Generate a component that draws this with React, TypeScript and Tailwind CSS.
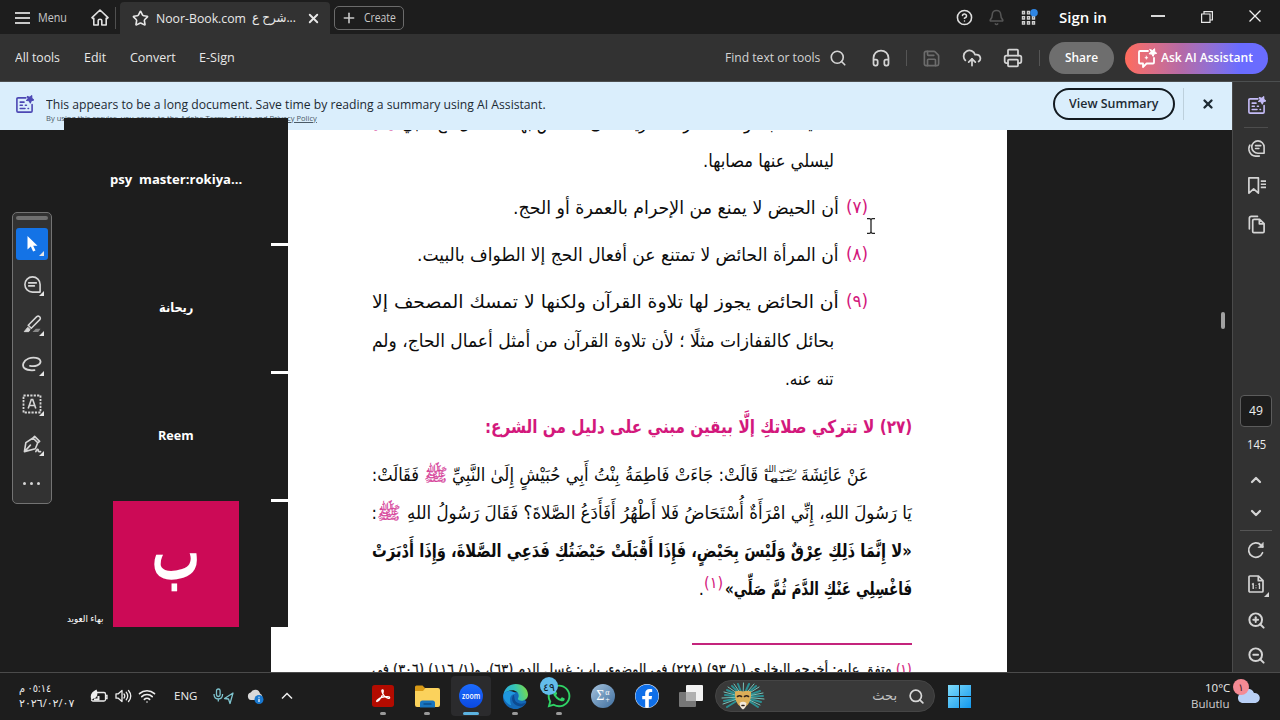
import { type ReactNode, useLayoutEffect, useRef, useState } from 'react'
import {
  Bell,
  ChevronDown,
  ChevronUp,
  CircleHelp,
  CloudUpload,
  Headphones,
  Plus,
  Printer,
  Save,
  Search,
  Star,
  Wifi,
  X,
  ZoomIn,
  ZoomOut
} from 'lucide-react'
import { FaFacebook, FaWhatsapp } from 'react-icons/fa'

interface FitProps {
  children: ReactNode
  className?: string
  rtl?: boolean
}

// Squeezes or stretches one line of text to the width of its box
const Fit = ({ children, className = '', rtl = false }: FitProps) => {
  const outer = useRef<HTMLSpanElement>(null)
  const inner = useRef<HTMLSpanElement>(null)
  const [scale, setScale] = useState(1)

  useLayoutEffect(() => {
    if (outer.current && inner.current) {
      setScale(outer.current.clientWidth / inner.current.offsetWidth)
    }
  }, [children])

  return (
    <span ref={outer} dir={rtl ? 'rtl' : 'ltr'} className={`block shrink-0 whitespace-pre ${className}`}>
      <span
        ref={inner}
        className={`inline-block ${rtl ? 'origin-right' : 'origin-left'}`}
        style={{ transform: `scaleX(${scale})` }}
      >
        {children}
      </span>
    </span>
  )
}

const SummaryIcon = ({ className = '' }: { className?: string }) => (
  <svg viewBox="0 0 20 20" className={className} fill="none" stroke="currentColor" strokeWidth="1.7" strokeLinecap="round" strokeLinejoin="round">
    <path d="M11.5 3H3.2Q2 3 2 4.2v12.6Q2 18 3.2 18h13.6q1.2 0 1.2-1.2V10" />
    <path d="M5.5 7.5h4M5.5 10.8h2.2M5.5 14.2h5M11 10.8h1M13.8 14.2h.4" />
    <path d="m13 1.5 2.6 1 2-1.8.1 2.8 2 1.8-2.6.7-1 2.4-1.3-2.3-2.7-.3 1.8-2z" fill="currentColor" strokeWidth="1.2" />
  </svg>
)

const ChatSparkIcon = ({ className = '' }: { className?: string }) => (
  <svg viewBox="0 0 20 20" className={className} fill="none" stroke="currentColor" strokeWidth="1.8" strokeLinecap="round" strokeLinejoin="round">
    <path d="M11 3H3Q2 3 2 4v10.5q0 1 1 1h3V19l3.6-3.5H16q1 0 1-1V10" />
    <path d="m13 1.5 2.6 1 2-1.8.1 2.8 2 1.8-2.6.7-1 2.4-1.3-2.3-2.7-.3 1.8-2z" fill="currentColor" strokeWidth="1" />
    <path d="m9.4 8 .5 1.2 1.2.5-1.2.5-.5 1.2-.5-1.2-1.2-.5 1.2-.5z" fill="currentColor" strokeWidth=".4" />
  </svg>
)

const TitleBar = () => (
  <header className="flex h-[34px] shrink-0 items-center bg-[#1d1d1d] pt-px text-[#c8c8c8]">
    <svg viewBox="0 0 15 12" className="ml-[15px] h-3 w-[15px]" stroke="currentColor" strokeWidth="1.8">
      <path d="M0 1h15M0 6h15M0 11h15" />
    </svg>
    <Fit className="ml-2 w-[29px] text-[13px]">Menu</Fit>
    <svg viewBox="0 0 18 17" className="ml-6 h-[17px] w-[18px]" fill="none" stroke="#e0e0e0" strokeWidth="1.6" strokeLinejoin="round">
      <path d="M1 8.6 9 1l8 7.6-1.2 1.2-.6-.6V16h-4.4v-4.4q0-1.4-1.8-1.4t-1.8 1.4V16H2.8V9.2l-.6.6z" />
    </svg>
    <div className="ml-1.5 h-[22px] w-px bg-[#505050]" />
    <div className="ml-1 mt-px flex h-8 w-[210px] items-center self-start rounded-t bg-[#323232] pl-3 text-[#e8e8e8]">
      <Star className="size-[17px] shrink-0" strokeWidth={2.3} />
      <Fit className="ml-[7px] w-[90px] text-[13.5px]">Noor-Book.com</Fit>
      <Fit className="ml-1.5 w-11 text-[13px]">شرح ع...</Fit>
      <X className="ml-2.5 size-[15px] shrink-0" strokeWidth={3} />
    </div>
    <div className="ml-1 flex h-6 w-[70px] items-center rounded-[5px] border-[1.5px] border-[#6b6b6b] pl-1.5">
      <Plus className="size-4 shrink-0" strokeWidth={2.4} />
      <Fit className="ml-[7px] w-8 text-xs">Create</Fit>
    </div>

    <div className="ml-auto flex items-center">
      <CircleHelp className="size-[17px] text-[#e0e0e0]" strokeWidth={2.2} />
      <Bell className="ml-[15px] size-[17px] text-[#555]" strokeWidth={2.2} />
      <svg viewBox="0 0 17 17" className="ml-4 size-[17px]" fill="none" stroke="#d0d0d0" strokeWidth="1.4">
        <path d="M1.5 2.5h2v2.4h-2zM6.5 2.5h2v2.4h-2zM1.5 7.6h2V10h-2zM6.5 7.6h2V10h-2zM11.5 7.6h2V10h-2zM1.5 12.7h2v2.4h-2zM6.5 12.7h2v2.4h-2zM11.5 12.7h2v2.4h-2z" />
        <circle cx="13" cy="3.8" r="3.8" fill="#2f86e4" stroke="none" />
      </svg>
      <Fit className="ml-[21px] w-12 text-[15px] font-semibold text-white">Sign in</Fit>
      <div className="ml-11 mb-1 h-[2px] w-3.5 bg-[#d8d8d8]" />
      <svg viewBox="0 0 12 12" className="ml-9 mb-0.5 size-3" fill="none" stroke="#e8e8e8" strokeWidth="1.2">
        <path d="M.6 3h8.4v8.4H.6zM3 3V.6h8.4V9H9" />
      </svg>
      <svg viewBox="0 0 12 12" className="ml-9 mr-[19px] mb-1 size-3" stroke="#f0f0f0" strokeWidth="1.3">
        <path d="m.5.5 11 11M11.5.5l-11 11" />
      </svg>
    </div>
  </header>
)

const ToolBar = () => (
  <nav className="flex h-12 shrink-0 items-center border-b border-[#4c4f50] bg-[#323232] pt-px pl-[15px] pr-3 text-[13px] text-[#e8e8e8]">
    <Fit className="w-[45px]">All tools</Fit>
    <Fit className="ml-6 w-[22px]">Edit</Fit>
    <Fit className="ml-6 w-[46px]">Convert</Fit>
    <Fit className="ml-[23px] w-9">E-Sign</Fit>
    <div className="ml-auto flex items-center text-[#d4d4d4]">
      <Fit className="w-[95px]">Find text or tools</Fit>
      <Search className="ml-[9px] size-[18px]" strokeWidth={2.2} />
      <Headphones className="ml-6 size-5" strokeWidth={2.1} />
      <div className="ml-[15px] h-4 w-px bg-[#555]" />
      <Save className="ml-[15px] size-[19px] text-[#6c6c6c]" strokeWidth={2.1} />
      <CloudUpload className="ml-[21px] size-5" strokeWidth={2.1} />
      <Printer className="ml-[21px] size-5" strokeWidth={2.1} />
      <div className="ml-4 h-4 w-px bg-[#555]" />
      <div className="ml-[9px] flex h-8 w-[65px] items-center justify-center rounded-full bg-[#6e6e6e] text-white">
        <Fit className="w-[33px] font-semibold">Share</Fit>
      </div>
      <div className="ml-[11px] flex h-[31px] w-[143px] items-center rounded-full bg-linear-to-r from-[#ff6b5b] via-[#b46aa8] via-40% to-[#6a6cff] to-80% pl-3 text-white">
        <ChatSparkIcon className="size-5 shrink-0" />
        <Fit className="ml-1 w-[92px] font-semibold">Ask AI Assistant</Fit>
      </div>
    </div>
  </nav>
)

const Banner = () => (
  <div className="relative flex h-12 shrink-0 items-center bg-[#daeefc] text-[#1d2a33]">
    <SummaryIcon className="ml-[15px] mb-1 size-[19px] shrink-0 text-[#4d48b4]" />
    <div className="ml-3 flex flex-col pt-[5px]">
      <Fit className="h-[18px] w-[500px] text-[13px] leading-[18px]">
        This appears to be a long document. Save time by reading a summary using AI Assistant.
      </Fit>
      <Fit className="h-2.5 w-[271px] text-[8px] leading-[10px] text-[#4a5a66]">
        By using this service, you agree to the Adobe Terms of Use and <u>Privacy Policy</u>
      </Fit>
    </div>
    <div className="ml-auto mb-1 flex items-center">
      <div className="flex h-8 w-[122px] items-center justify-center rounded-full border-2 border-[#131a20]">
        <Fit className="w-[90px] text-[13px] font-semibold">View Summary</Fit>
      </div>
      <div className="ml-2 h-8 w-px bg-[#bdd0dc]" />
      <X className="ml-[17px] mr-[17px] size-[14px]" strokeWidth={4} />
    </div>
  </div>
)

const Salla = ({ className = '' }: { className?: string }) => (
  <Fit rtl className={`w-6 text-[#d6439a] [-webkit-text-stroke:0.3px_#d6439a] ${className}`}>ﷺ</Fit>
)

const Point = ({ num, children }: { num: string; children: ReactNode }) => (
  <div className="flex h-[38px] items-center pr-11">
    <Fit rtl className="mt-0.5 ml-[7px] w-[22px] text-[17px] text-[#d3187c]">{num}</Fit>
    {children}
  </div>
)

const Page = () => (
  <article dir="rtl" className="ml-[271px] h-full w-[736px] overflow-hidden bg-white pl-[101px] pr-[95px] font-['DejaVu_Sans_Condensed','DejaVu_Sans',sans-serif] text-[18px] text-[#0c0c0c]">
    <div className="-mt-[27px] flex h-[38px] items-center pr-[78px]">
      <Fit rtl className="w-[432px]">أنه يستحب مواساة المرأة الحزينة على ما نقص بها كما فعل مع النبي</Fit>
      <Salla className="mr-1.5" />
    </div>
    <div className="flex h-[38px] items-center pr-[78px]">
      <Fit rtl className="w-[131px]">ليسلي عنها مصابها.</Fit>
    </div>
    <div className="mt-[9px] flex flex-col gap-[9px]">
      <Point num="(٧)">
        <Fit rtl className="w-[326px]">أن الحيض لا يمنع من الإحرام بالعمرة أو الحج.</Fit>
      </Point>
      <Point num="(٨)">
        <Fit rtl className="w-[422px]">أن المرأة الحائض لا تمتنع عن أفعال الحج إلا الطواف بالبيت.</Fit>
      </Point>
      <Point num="(٩)">
        <Fit rtl className="w-[467px]">أن الحائض يجوز لها تلاوة القرآن ولكنها لا تمسك المصحف إلا</Fit>
      </Point>
    </div>
    <div className="mt-px flex h-[38px] items-center pr-[78px]">
      <Fit rtl className="w-[462px]">بحائل كالقفازات مثلًا ؛ لأن تلاوة القرآن من أمثل أعمال الحاج، ولم</Fit>
    </div>
    <div className="flex h-[38px] items-center pr-[78px]">
      <Fit rtl className="w-[49px]">تنه عنه.</Fit>
    </div>
    <h2 className="mt-2.5 flex h-[38px] items-center font-bold text-[#d3187c]">
      <Fit rtl className="w-[427px]">(٢٧) لا تتركي صلاتكِ إلَّا بيقين مبني على دليل من الشرع:</Fit>
    </h2>
    <div className="mt-2.5 flex h-[38px] items-center pr-11">
      <Fit rtl className="w-[67px]">عَنْ عَائِشَةَ</Fit>
      <span className="mr-1 flex flex-col items-center">
        <Fit rtl className="h-[9px] w-[33px] text-[9px] leading-[9px]">رضي الله</Fit>
        <Fit rtl className="h-[9px] w-[33px] text-[9px] leading-[9px]">عنها</Fit>
      </span>
      <Fit rtl className="mr-1.5 w-[306px]">قَالَتْ: جَاءَتْ فَاطِمَةُ بِنْتُ أَبِي حُبَيْشٍ إِلَىٰ النَّبِيِّ</Fit>
      <Salla className="mr-1" />
      <Fit rtl className="mr-[5px] w-[47px]">فَقَالَتْ:</Fit>
    </div>
    <div className="flex h-[38px] items-center">
      <Fit rtl className="w-[505px]">يَا رَسُولَ اللهِ، إِنِّي امْرَأَةٌ أُسْتَحَاضُ فَلا أَطْهُرُ أَفَأَدَعُ الصَّلاةَ؟ فَقَالَ رَسُولُ اللهِ</Fit>
      <Salla className="mr-1.5" />
      <span>:</span>
    </div>
    <div className="flex h-[38px] items-center font-bold">
      <Fit rtl className="w-[540px]">«لا إِنَّمَا ذَلِكِ عِرْقٌ وَلَيْسَ بِحَيْضٍ، فَإِذَا أَقْبَلَتْ حَيْضَتُكِ فَدَعِي الصَّلاةَ، وَإِذَا أَدْبَرَتْ</Fit>
    </div>
    <div className="flex h-[38px] items-center font-bold">
      <Fit rtl className="w-[187px]">فَاغْسِلِي عَنْكِ الدَّمَ ثُمَّ صَلِّي»</Fit>
      <Fit rtl className="mr-0.5 mb-2.5 w-[19px] text-[16px] font-normal text-[#d3187c]">(١)</Fit>
      <span className="font-normal">.</span>
    </div>
    <div className="-ml-px mt-9 h-[2px] w-[220px] bg-[#c4247c]" />
    <div className="mt-2 flex h-8 items-center text-[14px] [-webkit-text-stroke:0.2px]">
      <Fit rtl className="w-[16px] text-[#d3187c]">(١)</Fit>
      <Fit rtl className="mr-1 w-[520px]">متفق عليه: أخرجه البخاري (١/ ٩٣) (٢٢٨) في الوضوء، باب: غسل الدم (٦٣)، و(١/ ١١٦) (٣٠٦) في</Fit>
    </div>
  </article>
)

const Corner = () => (
  <svg viewBox="0 0 5 5" className="absolute right-1 bottom-1 size-[5px]">
    <path d="M5 0v5H0z" fill="#e6e6e6" />
  </svg>
)

const toolIcons = [
  <svg key="note" viewBox="0 0 20 20" className="size-[19px]" fill="none" stroke="currentColor" strokeWidth="1.7" strokeLinecap="round" strokeLinejoin="round">
    <path d="M10 2a8 8 0 1 0 0 16h8v-8a8 8 0 0 0-8-8Z" />
    <path d="M6 8.3h8M6 11.5h6" />
  </svg>,
  <svg key="marker" viewBox="0 0 20 20" className="size-[19px]" fill="none" stroke="currentColor" strokeWidth="1.6" strokeLinejoin="round">
    <path d="m5.5 10.7 9-9q1.5-1.200 3 .2 1.4 1.500.2 3l-9 9z" />
    <path d="m5 13 2.500 2.200L6 17.500H1.300z" fill="currentColor" strokeWidth="1" />
    <path d="M10 18h6l2.500-3.500h-5z" fill="#888" stroke="none" />
  </svg>,
  <svg key="loop" viewBox="0 0 20 20" className="size-[20px]" fill="none" stroke="currentColor" strokeWidth="1.8" strokeLinecap="round">
    <path d="M8 11.8C13 13 19 11 18.500 7.300 18 3.500 11 2.800 6.500 4.500 1.500 6.500-.5 11.500 2.500 14.300q3 2.500 10 1.900" />
  </svg>,
  <svg key="textbox" viewBox="0 0 20 20" className="size-5" fill="none" stroke="currentColor">
    <rect x="1.5" y="1.5" width="17" height="17" strokeWidth="1.8" strokeDasharray="2.2 1.2" />
    <path d="m6.2 14.5 3.1-9h1.4l3.1 9M7.3 11.5h5.4" strokeWidth="1.6" />
  </svg>,
  <svg key="sign" viewBox="0 0 20 20" className="size-[19px]" fill="none" stroke="currentColor" strokeWidth="1.7" strokeLinecap="round" strokeLinejoin="round">
    <path d="M1.5 17.5 3 8l7.5-4.800 5 5-2.500 6.300zM10.500 3.200l1.700-1.700 5.300 5.200-2 1.500M1.800 17.200l6-6.500" />
    <path d="M13.5 17.5c1.5-3 2.500-3 2.500-1.300 0 1.500 1 1.300 2.500 1.300" />
  </svg>
]

const ToolBox = () => (
  <aside className="absolute top-[130px] left-3 flex h-[292px] w-10 flex-col items-center rounded-[5px] border border-[#737373] bg-[#323232] text-[#d6d6d6]">
    <div className="mt-[3px] h-1 w-8 rounded-full bg-[#707070]" />
    <div className="relative mt-2 flex size-8 items-center justify-center rounded-[3px] bg-[#1473e6]">
      <svg viewBox="0 0 12 16" className="h-4 w-3" fill="#fff">
        <path d="M1.5 0v13.500l3.300-3 2.300 5 2.400-1.100-2.300-4.700h4.300z" />
      </svg>
      <Corner />
    </div>
    {toolIcons.map((icon, i) => (
      <div key={i} className="relative mt-2 flex size-8 items-center justify-center">
        {icon}
        <Corner />
      </div>
    ))}
    <div className="mt-[22px] flex gap-1 pr-px">
      <i className="size-[3px] rounded-full bg-current" />
      <i className="size-[3px] rounded-full bg-current" />
      <i className="size-[3px] rounded-full bg-current" />
    </div>
  </aside>
)

// Floating participant strip of the meeting window
const Participants = () => (
  <section className="absolute top-9 left-16 flex w-56 flex-col gap-[3px] text-[13px] font-bold text-white *:bg-[#1d1d1d]">
    <div className="flex h-[125px] items-center justify-center pb-0.5">
      <Fit className="w-[132px]">psy  master:rokiya...</Fit>
    </div>
    <div className="flex h-[125px] items-center justify-center pb-0.5">
      <Fit rtl className="w-[34px]">ريحانة</Fit>
    </div>
    <div className="flex h-[125px] items-center justify-center pb-0.5">
      <Fit className="w-9">Reem</Fit>
    </div>
    <div className="flex h-[125px] items-end">
      <Fit rtl className="ml-[3px] w-[37px] text-[9.5px] leading-[17px] font-normal">بهاء العويد</Fit>
      <div className="ml-[9px] flex size-[126px] items-center justify-center bg-[#cc0a56]">
        <Fit rtl className="mb-[22px] w-[48px] font-['DejaVu_Sans',sans-serif] text-[72px] leading-none font-normal [-webkit-text-stroke:2.5px_white]">ب</Fit>
      </div>
    </div>
  </section>
)

const Rail = () => (
  <aside className="flex w-12 shrink-0 flex-col items-center border-l border-[#4a4a4a] bg-[#323232] pr-px text-[#d4d4d4]">
    <SummaryIcon className="mt-3.5 size-[19px] text-[#c5bcf8]" />
    <div className="mt-3 h-px w-6 bg-[#4d4d4d]" />
    <svg viewBox="0 0 20 20" className="mt-[11px] size-[19px]" fill="none" stroke="currentColor" strokeWidth="1.7" strokeLinecap="round" strokeLinejoin="round">
      <path d="M11.5 2a6.500 6.500 0 1 0 0 13H18V8.500A6.500 6.500 0 0 0 11.500 2ZM9 7h5.500M9 10h3.500" />
      <path d="M3 6.500C.5 11 3 17.500 9 18h4" />
    </svg>
    <svg viewBox="0 0 20 20" className="mt-[18px] size-[19px]" fill="none" stroke="currentColor" strokeWidth="1.8" strokeLinejoin="round">
      <path d="M2 2h10v16l-5-4.500L2 18zM14.500 5.500H20M14.500 8.700H20M14.500 12H20" />
    </svg>
    <svg viewBox="0 0 20 20" className="mt-5 size-[19px]" fill="none" stroke="currentColor" strokeWidth="1.8" strokeLinecap="round" strokeLinejoin="round">
      <path d="M7.500 4.500h5.800L18 9v8.300q0 1.200-1.200 1.200H7.200q-1.200 0-1.200-1.200V5.700q0-1.200 1.500-1.200ZM13 4.800V9.300h4.800" />
      <path d="M2.500 14.500v-11q0-2 2-2H11" />
    </svg>

    <div className="mt-[161px] flex h-8 w-8 items-center justify-center rounded-[4px] border border-[#5c5c5c] bg-[#1d1d1d] text-[#eee]">
      <Fit className="w-3.5 text-[13px] font-medium">49</Fit>
    </div>
    <Fit className="mt-2 w-[19px] text-[13px] font-medium text-[#eee]">145</Fit>
    <ChevronUp className="mt-[17px] size-4" strokeWidth={3.4} />
    <ChevronDown className="mt-[17px] size-4" strokeWidth={3.4} />
    <div className="mt-[9px] h-px w-8 bg-[#555]" />
    <svg viewBox="0 0 20 20" className="mt-2.5 size-[18px]" fill="none" stroke="currentColor" strokeWidth="1.9" strokeLinecap="round" strokeLinejoin="round">
      <path d="M17.300 13A8 8 0 1 1 15.600 4.500L17.500 6.500" />
      <path d="M18 2v5.200h-5.200z" fill="currentColor" strokeWidth=".8" />
    </svg>
    <div className="relative mt-4 flex h-[18px] w-8 items-center justify-center">
      <svg viewBox="0 0 16 18" className="h-[18px] w-4" fill="none" stroke="currentColor" strokeWidth="1.7" strokeLinejoin="round">
        <path d="M2 1h8.500L15 5.500V16q0 1-1 1H2q-1 0-1-1V2q0-1 1-1ZM10.300 1v4.700H15" />
        <path d="m4 9.500 1.200-.9V14M10.300 9.500l1.200-.9V14M8 10v.6M8 12.600v.6" strokeWidth="1.400" />
      </svg>
      <svg viewBox="0 0 5 5" className="absolute right-[3px] -bottom-1 size-[5px]">
        <path d="M5 0v5H0z" fill="#d4d4d4" />
      </svg>
    </div>
    <ZoomIn className="mt-[18px] size-[19px] shrink-0" strokeWidth={2.5} />
    <ZoomOut className="mt-4 size-[19px] shrink-0" strokeWidth={2.5} />
  </aside>
)

const Slot = ({ children, mark = true }: { children: ReactNode; mark?: boolean }) => (
  <div className="relative flex h-10 w-11 items-center justify-center">
    {children}
    {mark && <span className="absolute bottom-px h-[3px] w-[6px] rounded-full bg-[#9a9a9a]" />}
  </div>
)

const TaskBar = () => (
  <footer className="relative flex h-12 shrink-0 items-center border-t border-[#4b4b4b] bg-[#1d1d1d] pb-px text-[11.5px] text-[#ededed]">
    <div className="ml-[19px] mb-0.5 flex w-[55px] flex-col items-start text-[11px] leading-[15px]">
      <Fit rtl className="w-8">٠٥:١٤ م</Fit>
      <Fit className="w-[55px]">٢٠٢٦/٠٢/٠٧</Fit>
    </div>
    <svg viewBox="0 0 18 14" className="ml-4 h-3.5 w-[18px]" fill="none" stroke="currentColor" strokeWidth="1.3">
      <path d="M7 3.500h7q1.500 0 1.500 1.500v5.500q0 1.500-1.500 1.500H3q-1.500 0-1.500-1.500M15.500 6.500h1.500v3h-1.500" />
      <path d="M1.500 11C-.5 6 1.500 3 6.500.500 8.500 5 7 9 3.500 9.500z" fill="currentColor" stroke="none" />
      <path d="M4 10.500h4.500V7" strokeWidth="2" />
    </svg>
    <svg viewBox="0 0 17 14" className="ml-[7px] h-3.5 w-[17px]" fill="none" stroke="currentColor" strokeWidth="1.3" strokeLinecap="round" strokeLinejoin="round">
      <path d="M1 4.800h2.300L7 1.500v11L3.300 9.200H1zM9 5q1.500 2 0 4M11.200 3.200q3 3.800 0 7.600M13.500 1.500q4.500 5.500 0 11" />
    </svg>
    <Wifi className="ml-1.5 size-[18px]" strokeWidth={2.2} />
    <Fit className="ml-[18px] w-[23px]">ENG</Fit>
    <svg viewBox="0 0 21 17" className="ml-4 h-[17px] w-[21px]" fill="none" stroke="#7fc4cf" strokeWidth="1.3" strokeLinejoin="round">
      <rect x="3.5" y="1" width="3.6" height="7.5" rx="1.8" />
      <path d="M1 6q0 5 4.300 5T9.600 6M5.300 11v2.500M20 5l-8.500 5.500 4 .5 1.500 4.500z" />
    </svg>
    <svg viewBox="0 0 17 17" className="ml-[13px] size-[17px]">
      <path d="M4 12a3.800 3.800 0 0 1-.3-7.400A5 5 0 0 1 13 5.500a3.500 3.500 0 0 1 0 6.500z" fill="#d9d9d9" />
      <circle cx="12" cy="11.5" r="4.5" fill="#1878d0" />
      <path d="M12 10.800v3.200M12 8.700v1" stroke="#fff" strokeWidth="1.2" />
    </svg>
    <svg viewBox="0 0 12 8" className="ml-[17px] h-2 w-3" fill="none" stroke="currentColor" strokeWidth="1.5">
      <path d="m1 6.500 5-5 5 5" />
    </svg>

    <div className="ml-[68px] flex items-center">
      <Slot>
        <svg viewBox="0 0 24 24" className="size-[22px]" fill="none">
          <rect width="24" height="24" rx="3" fill="#b30b00" />
          <path d="M5.500 18c3-1 7-7.500 6.800-11.500-.2-2-2-1.500-1.500.5.700 3.500 3.700 7 7 7.500 2 .2 2-1.500 0-1.700-4-.5-9 1-11.500 3.200-1.300 1.200-1.500 2-.8 2z" stroke="#fff" strokeWidth="1.4" />
        </svg>
      </Slot>
      <Slot>
        <svg viewBox="0 0 25 23" className="h-[23px] w-[25px]">
          <path d="M0 2q0-1.500 1.500-1.500h6L10 3h4v5H0z" fill="#d99a16" />
          <path d="M0 6h8l2.500-3H23q2 0 2 2v15q0 2-2 2H2q-2 0-2-2z" fill="#fbd25c" />
          <path d="M5 22.500V18q0-2.500 2.500-2.500h10Q20 15.500 20 18v4.500z" fill="#1875c0" />
          <path d="M8.500 19h8" stroke="#0d4f8c" strokeWidth="1.5" />
        </svg>
      </Slot>
      <div className="relative flex h-10 w-11 items-center justify-center">
        <div className="flex h-10 w-10 items-center justify-center rounded bg-[#2b2b2d]">
          <div className="flex size-6 items-center justify-center rounded-full bg-linear-to-b from-[#1c6bff] to-[#0b48e0]">
            <Fit className="w-[18px] text-[8px] leading-none font-semibold text-white">zoom</Fit>
          </div>
        </div>
        <span className="absolute bottom-px h-[3px] w-4 rounded-full bg-[#5cb3e0]" />
      </div>
      <Slot>
        <svg viewBox="0 0 24 24" className="size-[25px]">
          <defs>
            <linearGradient id="edgeTop" x1="0" y1="0.5" x2="1" y2="0.3">
              <stop offset="0" stopColor="#2aa8e0" />
              <stop offset=".5" stopColor="#35c5b6" />
              <stop offset="1" stopColor="#7bdc45" />
            </linearGradient>
          </defs>
          <path d="M0 11a12 12 0 0 0 21 9l1.500-3L14 8 3 7z" fill="#1469b8" />
          <path d="M.3 10C1.500 4 6 0 12.300 0 19 0 24 4.700 24 10c0 4-3 6-6.200 6-3 0-4-1.200-3.300-2.500C16.500 9.500 13 6 9 6 5 6 1.500 8 .3 10z" fill="url(#edgeTop)" />
          <path d="M10 10c-3.500 5.500.5 11 7 11.500 2.500 0 5-2 5.500-4-4 2.500-9.500 1.500-11-2-.8-2-.3-4-1.500-5.500z" fill="#0d4a90" />
          <path d="M.3 10C2 6.500 9 5 12 9.500 7 9.500 5.500 14 8 20.500 4 19.500 0 15 .3 10z" fill="#1f97de" />
        </svg>
      </Slot>
      <Slot>
        <FaWhatsapp className="size-[26px] text-[#2fd366]" />
        <span className="absolute top-px left-[3px] flex size-[18px] items-center justify-center rounded-full bg-[#63bdec] text-[11px] leading-none text-[#10202a]">٤٩</span>
      </Slot>
      <Slot mark={false}>
        <div className="flex size-6 items-center justify-center gap-px rounded-full bg-linear-to-br from-[#a6c3dc] to-[#3f6f9f] font-['Liberation_Serif',serif] leading-none text-white">
          <span className="text-[14px]">Σ</span>
          <span className="flex flex-col text-[8px] leading-[7px]">
            <span>α</span>
            <span>+</span>
          </span>
        </div>
      </Slot>
      <Slot mark={false}>
        <div className="flex size-6 items-center justify-center rounded-full bg-white">
          <FaFacebook className="size-6 shrink-0 text-[#0f6fe8]" />
        </div>
      </Slot>
      <Slot mark={false}>
        <svg viewBox="0 0 24 22" className="h-[22px] w-6">
          <rect x="0" y="7" width="17" height="15" rx="1" fill="#777" />
          <rect x="7" y="0" width="17" height="16" rx="1" fill="#f2f2f2" />
          <rect x="7" y="7" width="10" height="9" fill="#b0b0b0" />
        </svg>
      </Slot>
    </div>

    <div className="ml-0.5 flex h-8 w-[220px] items-center rounded-full border border-[#454545] bg-[#393939] pl-1">
      <svg viewBox="0 0 46 28" className="h-7 w-[46px]" fill="none" strokeLinecap="round">
        <g stroke="#2b8f92" strokeWidth="2">
          <path d="M23 15 5 13M23 15 4 19M23 15 7 25M23 15 7 8M23 15 12 4M23 15 18 2M23 15 29 2M23 15 36 4M23 15 40 9M23 15l20-1M23 15l18 5M23 15l15 10" />
        </g>
        <g stroke="#7fd3c8" strokeWidth=".9">
          <path d="M23 15 2 16M23 15 4 10M23 15 8 5M23 15 14 2M23 15l.5-14M23 15 34 2M23 15 39 5M23 15l20-4M23 15l21 2M23 15l17 8M23 15 3 22" />
        </g>
        <path d="M15 9.500q3.500-1.500 8 0 4.500-1.500 8 0 .5 8-3 13-5 6-10 0-3.500-5-3-13z" fill="#dcae58" />
        <path d="M19.500 21q3.500-2.500 7 0-.5 5-3.500 6.500-3-1.500-3.500-6.500z" fill="#f3e9da" />
        <path d="M17.500 14.500q2-1.500 4 0M24.500 14.500q2-1.500 4 0M22 23.500h2" stroke="#30231a" strokeWidth="1.6" />
      </svg>
      <Fit rtl className="ml-[106px] w-[25px] text-[13px] text-[#c4c4c4]">بحث</Fit>
      <Search className="ml-[11px] size-[17px] text-[#d8d8d8]" strokeWidth={2.4} />
    </div>
    <svg viewBox="0 0 23 23" className="ml-[13px] size-[23px]">
      <defs>
        <linearGradient id="win" x1="0" y1="0" x2="1" y2="1">
          <stop offset="0" stopColor="#7fdcfb" />
          <stop offset="1" stopColor="#1298ee" />
        </linearGradient>
      </defs>
      <path d="M0 0h11v11H0zM12 0h11v11H12zM0 12h11v11H0zM12 12h11v11H12z" fill="url(#win)" />
    </svg>

    <div className="mr-[19px] ml-auto flex items-center gap-1.5">
      <div className="flex flex-col items-end leading-[16px]">
        <Fit className="w-[25px]">10°C</Fit>
        <Fit className="w-[39px] text-[#cfcfcf]">Bulutlu</Fit>
      </div>
      <div className="relative h-[25px] w-[25px]">
        <svg viewBox="0 0 25 18" className="mt-0.5 h-[18px] w-[25px]">
          <path d="M6 17a5 5 0 0 1-1-9.500A7 7 0 0 1 18 7a5 5 0 1 1 1.500 10z" fill="#b9d0f6" />
        </svg>
        <span className="absolute -top-[5px] -left-[3px] flex size-4 items-center justify-center rounded-full bg-[#f58a94] text-[10px] leading-none text-[#3a1418]">١</span>
      </div>
    </div>
  </footer>
)

// Text cursor hovering over the page
const Caret = () => (
  <svg viewBox="0 0 8 16" className="absolute top-[88px] left-[867px] h-4 w-2" fill="none" stroke="#222" strokeWidth="1.3">
    <path d="M0 .7h2.500Q4 .7 4 2.500v11q0 1.800-1.500 1.800H0M8 .7H5.500Q4 .7 4 2.500M4 13.500q0 1.800 1.500 1.800H8" />
  </svg>
)

const App = () => {
  return (
    <div className="flex h-[720px] w-[1280px] flex-col overflow-hidden bg-[#1d1d1d] font-['Open_Sans','DejaVu_Sans',sans-serif]">
      <TitleBar />
      <ToolBar />
      <div className="flex h-[590px] shrink-0">
        <main className="relative flex w-[1232px] flex-col overflow-hidden">
          <Banner />
          <div className="relative h-[542px]">
            <Page />
            <Caret />
            <span className="absolute top-[182px] right-[7px] h-[17px] w-1 rounded-full bg-[#a0a0a0]" />
          </div>
          <Participants />
          <ToolBox />
        </main>
        <Rail />
      </div>
      <TaskBar />
    </div>
  )
}

export default App
